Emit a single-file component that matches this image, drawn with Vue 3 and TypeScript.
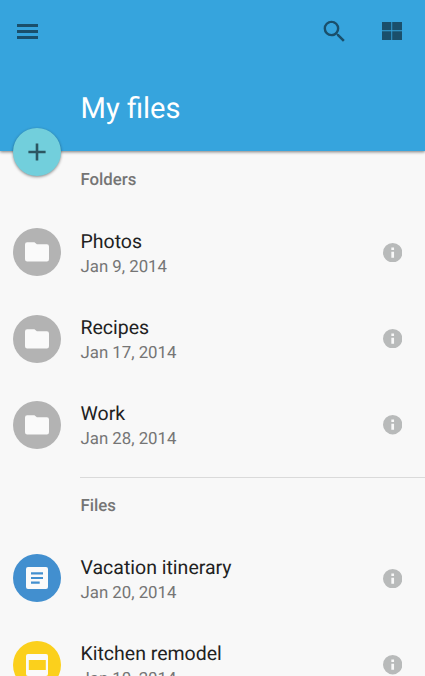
<script setup lang="ts">
type Kind = 'folder' | 'doc' | 'slide'

interface Entry {
  name: string
  date: string
  kind: Kind
}

interface Section {
  title: string
  entries: Entry[]
}

const sections: Section[] = [
  {
    title: 'Folders',
    entries: [
      { name: 'Photos', date: 'Jan 9, 2014', kind: 'folder' },
      { name: 'Recipes', date: 'Jan 17, 2014', kind: 'folder' },
      { name: 'Work', date: 'Jan 28, 2014', kind: 'folder' },
    ],
  },
  {
    title: 'Files',
    entries: [
      { name: 'Vacation itinerary', date: 'Jan 20, 2014', kind: 'doc' },
      { name: 'Kitchen remodel', date: 'Jan 10, 2014', kind: 'slide' },
    ],
  },
]
</script>

<template>
  <div class="screen">
    <header class="bar">
      <div class="actions">
        <button class="icon-btn menu" aria-label="Menu">
          <svg width="21" height="15" viewBox="0 0 21 15"><path d="M0 0h21v3H0zM0 6h21v3H0zM0 12h21v3H0z" /></svg>
        </button>
        <button class="icon-btn search" aria-label="Search">
          <svg width="29" height="29" viewBox="0 0 24 24">
            <path d="M15.5 14h-.79l-.28-.27A6.47 6.47 0 0 0 16 9.5 6.5 6.5 0 1 0 9.5 16c1.61 0 3.09-.59 4.23-1.57l.27.28v.79l5 4.99L20.49 19l-4.99-5zm-6 0C7.01 14 5 11.99 5 9.5S7.01 5 9.5 5 14 7.01 14 9.5 11.99 14 9.5 14z" />
          </svg>
        </button>
        <button class="icon-btn grid" aria-label="Grid view">
          <svg width="20" height="18" viewBox="0 0 20 18"><path d="M0 0h9.3v8.3H0zM10.2 0H20v8.3h-9.8zM0 9.2h9.3V18H0zM10.2 9.2H20V18h-9.8z" /></svg>
        </button>
      </div>
      <h1 class="title">My files</h1>
      <button class="fab" aria-label="Add">
        <svg width="18" height="18" viewBox="0 0 18 18"><path d="M7.7 0.4h2.6v7.3h7.3v2.6h-7.3v7.3H7.7v-7.3H.4V7.7h7.3z" /></svg>
      </button>
    </header>

    <main>
      <section v-for="section in sections" :key="section.title" class="section">
        <h2 class="subheader">{{ section.title }}</h2>
        <ul class="list">
          <li v-for="entry in section.entries" :key="entry.name" class="row">
            <span class="avatar" :class="entry.kind">
              <svg v-if="entry.kind === 'folder'" width="24" height="20" viewBox="0 0 24 20">
                <path d="M2.2 0.3h7.2l2.5 2h9.8A2.2 2.2 0 0 1 24 4.5v12.8a2.2 2.2 0 0 1-2.2 2.2H2.2A2.2 2.2 0 0 1 0 17.3V2.5A2.2 2.2 0 0 1 2.2.3z" />
              </svg>
              <svg v-else-if="entry.kind === 'doc'" width="22" height="22" viewBox="0 0 22 22">
                <path fill-rule="evenodd" d="M2 0h18A2 2 0 0 1 22 2v18a2 2 0 0 1-2 2H2A2 2 0 0 1 0 20V2A2 2 0 0 1 2 0zM5 5.3v2.1h12V5.3zM5 9.9V12h12V9.9zM5 14.6v2.1h8.7v-2.1z" />
              </svg>
              <svg v-else width="22" height="22" viewBox="0 0 22 22">
                <path fill-rule="evenodd" d="M2 0h18A2 2 0 0 1 22 2v18a2 2 0 0 1-2 2H2A2 2 0 0 1 0 20V2A2 2 0 0 1 2 0zM2.8 6v10h17V6z" />
              </svg>
            </span>
            <span class="text">
              <span class="name">{{ entry.name }}</span>
              <span class="date">{{ entry.date }}</span>
            </span>
            <svg class="info" viewBox="2 2 20 20">
              <path d="M12 2a10 10 0 1 0 0 20 10 10 0 0 0 0-20zm1.4 15.2h-2.8V11h2.8zm0-8h-2.8V6.6h2.8z" />
            </svg>
          </li>
        </ul>
      </section>
    </main>
  </div>
</template>

<style>
body {
  margin: 0;
  background: #f8f8f8;
}
</style>

<style scoped>
.screen {
  height: 676px;
  overflow: hidden;
  background: #f8f8f8;
  font-family: Roboto, "Liberation Sans", sans-serif;
  text-rendering: geometricPrecision;
}

.bar {
  position: relative;
  box-sizing: border-box;
  height: 151.2px;
  background: #36a4dd;
  box-shadow: 0 1px 3px rgba(0, 0, 0, 0.5);
}

.actions {
  display: flex;
  align-items: center;
  height: 62px;
  padding: 0 23px 0 17px;
}

.icon-btn {
  display: flex;
  padding: 0;
  border: 0;
  background: none;
  fill: #1a4f6b;
}

.search {
  margin-left: auto;
  margin-right: 33.5px;
}

.title {
  margin: 29px 0 0 80.5px;
  color: #fff;
  font-size: 29.1px;
  font-weight: 400;
  line-height: 36px;
}

.fab {
  position: absolute;
  left: 13px;
  bottom: -24.4px;
  display: flex;
  align-items: center;
  justify-content: center;
  width: 48px;
  height: 48px;
  padding: 0;
  border: 0;
  border-radius: 50%;
  background: #72cfdc;
  box-shadow: 0 1px 3px rgba(0, 0, 0, 0.45);
  fill: #2c5661;
}

.section + .section::before {
  content: '';
  display: block;
  height: 1px;
  margin: 8.6px 0 -0.7px 80px;
  background: #dadada;
}

.subheader {
  height: 58px;
  margin: 0 0 0 80.5px;
  color: #757575;
  font-size: 16.8px;
  font-weight: 500;
  line-height: 59px;
}

.list {
  margin: 0;
  padding: 0;
  list-style: none;
}

.row {
  display: flex;
  align-items: center;
  height: 86.4px;
  padding: 0 23px 0 13px;
}

.avatar {
  display: flex;
  align-items: center;
  justify-content: center;
  width: 48px;
  height: 48px;
  margin-right: 19.5px;
  border-radius: 50%;
  fill: #fafafa;
}

.folder {
  background: #b3b3b3;
}

.doc {
  background: #428fcf;
}

.slide {
  background: #fbd01c;
}

.text {
  display: flex;
  flex: 1;
  flex-direction: column;
  padding-top: 4px;
}

.name {
  color: #212121;
  font-size: 19.5px;
  line-height: 25px;
}

.date {
  color: #757575;
  font-size: 16.8px;
  line-height: 26.6px;
}

.info {
  width: 19.4px;
  height: 19.4px;
  fill: #b8baba;
}
</style>
